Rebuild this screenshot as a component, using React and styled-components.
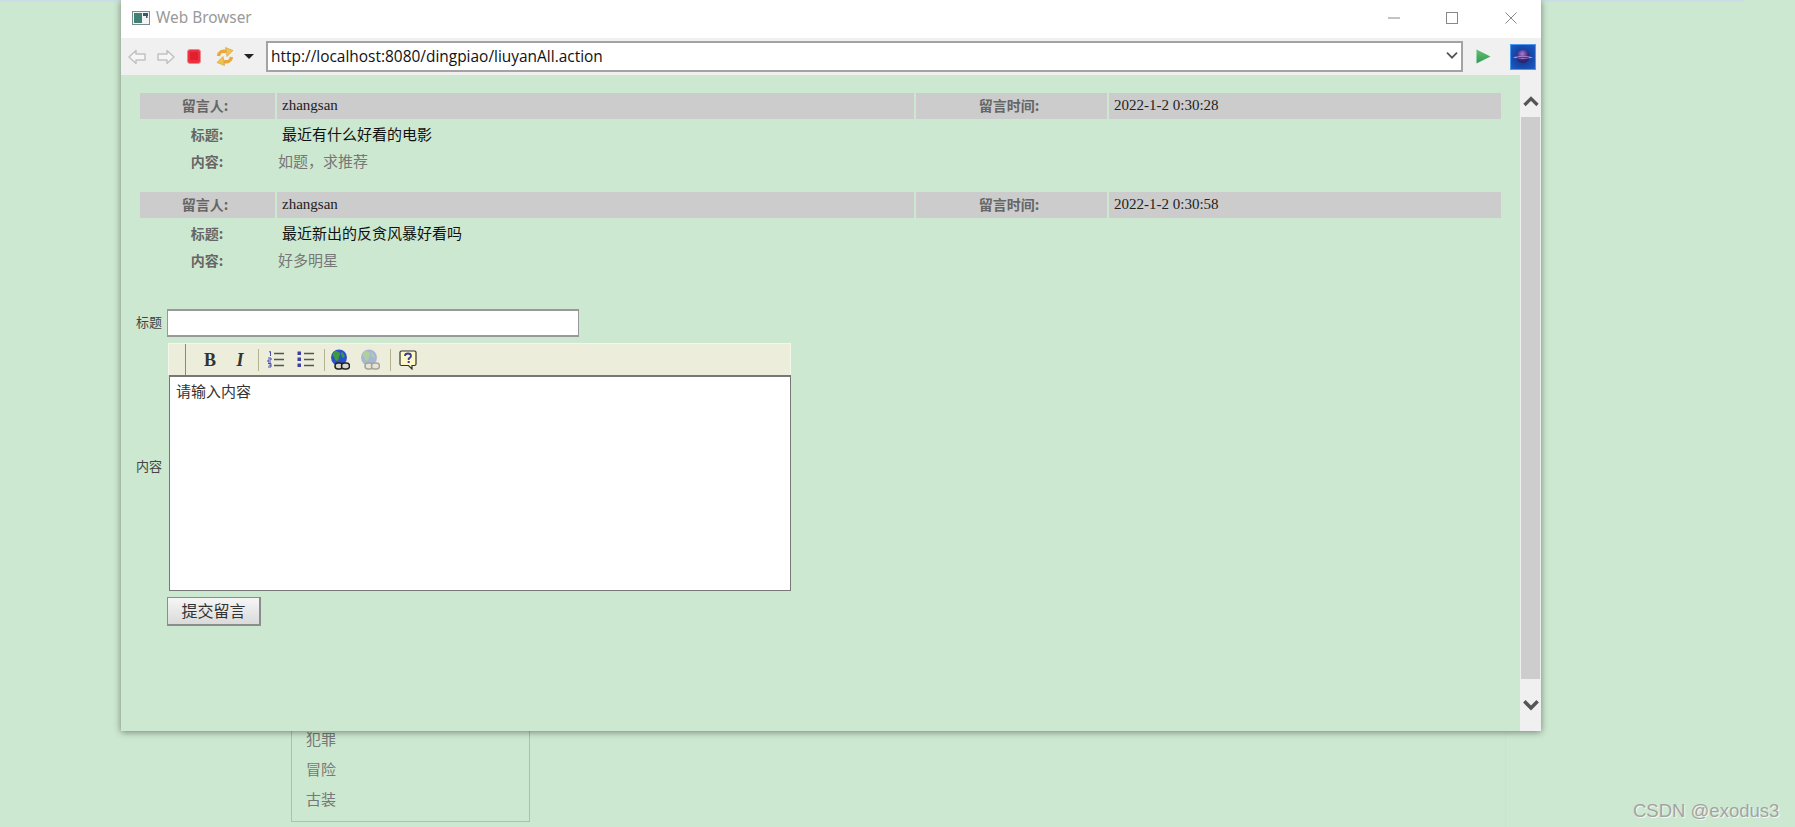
import styled, { createGlobalStyle } from 'styled-components';

const messages = [
  { id: 1, user: 'zhangsan', time: '2022-1-2 0:30:28', title: '最近有什么好看的电影', body: '如题\uFF0C求推荐' },
  { id: 2, user: 'zhangsan', time: '2022-1-2 0:30:58', title: '最近新出的反贪风暴好看吗', body: '好多明星' },
];

const cjk = '"Noto Sans CJK SC", "Liberation Sans", sans-serif';
const serif = '"Liberation Serif", "Noto Sans CJK SC", serif';

const GlobalStyle = createGlobalStyle`
  html, body {
    margin: 0;
    height: 827px;
    overflow: hidden;
    background: #cde8d0;
  }
  * {
    box-sizing: border-box;
  }
`;

// page lying behind the browser window
const Desktop = styled.div`
  position: relative;
  width: 1795px;
  height: 827px;
  overflow: hidden;
`;

const TopStrip = styled.div`
  width: 1744px;
  height: 2px;
  background: #cbdde6;
`;

const Behind = styled.div`
  width: 1506px;
  height: 825px;
  border-right: 1px solid #c6e2dc;
  display: flex;
  flex-direction: column;
  justify-content: flex-end;
  padding: 0 0 5px 291px;
`;

const GenreBox = styled.ul`
  width: 239px;
  margin: 0;
  padding: 0 0 7px 14px;
  list-style: none;
  border: 1px solid #8fcac4;
  border-width: 0 1px 1px 1px;
`;

const Genre = styled.li`
  height: 30px;
  font: 15px/30px ${cjk};
  color: #777;
`;

const Watermark = styled.div`
  position: absolute;
  left: 1633px;
  top: 800px;
  font: 18.5px/22px "Liberation Sans", sans-serif;
  color: #a3a3a3;
  text-shadow: 1px 1px 0 #f2f7f2;
  white-space: nowrap;
`;

const Browser = styled.div`
  position: absolute;
  left: 121px;
  top: 0;
  width: 1420px;
  height: 731px;
  display: flex;
  flex-direction: column;
  background: #fff;
  box-shadow: 0 1px 7px rgba(0, 0, 0, 0.45);
`;

const TitleBar = styled.div`
  height: 38px;
  display: flex;
  align-items: center;
  padding: 0 1px 2px 11px;
  background: #fff;
`;

const TitleText = styled.span`
  margin-left: 6px;
  font: 15.4px/20px "Noto Sans", sans-serif;
  color: #999;
  flex: 1;
`;

const WindowControl = styled.div`
  width: 58.5px;
  height: 36px;
  display: flex;
  align-items: center;
  justify-content: center;
`;

const Toolbar = styled.div`
  height: 37px;
  display: flex;
  align-items: center;
  background: #f0f0f0;
`;

const NavIcon = styled.span`
  display: flex;
  margin-left: ${(p) => p.$ml}px;
`;

const UrlBar = styled.div`
  width: 1197px;
  height: 31px;
  margin-left: 12px;
  display: flex;
  align-items: center;
  justify-content: space-between;
  padding: 0 3px 2px 3px;
  background: #fff;
  border: 2px solid #a3a3a3;
  font: 15.45px/20px "Open Sans", sans-serif;
  color: #111;
`;

const Body = styled.div`
  flex: 1;
  display: flex;
  min-height: 0;
`;

const Content = styled.div`
  flex: 1;
  padding-top: 18px;
  background: #cde8d0;
`;

const Message = styled.div`
  width: 1361px;
  margin: 0 0 16px 19px;
`;

const HeadRow = styled.div`
  display: grid;
  grid-template-columns: 135px 637px 191px 392px;
  column-gap: 2px;
  margin-bottom: 2px;
`;

const HeadLabel = styled.div`
  height: 26px;
  padding-right: 5px;
  background: #cccccc;
  font: bold 14px/24px ${cjk};
  color: #666;
  text-align: center;
`;

const HeadValue = styled.div`
  height: 26px;
  padding-left: 5px;
  background: #cccccc;
  font: 15px/24px ${serif};
  color: #222;
  white-space: nowrap;
`;

const TextRow = styled.div`
  height: 27.5px;
  padding-bottom: 2px;
  display: flex;
  align-items: center;
`;

const TextLabel = styled.div`
  width: 137px;
  padding-right: 3px;
  font: bold 14px/20px ${cjk};
  color: #666;
  text-align: center;
`;

const TitleValue = styled.div`
  margin-left: 5px;
  font: 15px/20px ${cjk};
  color: #111;
`;

const BodyValue = styled.div`
  margin-left: 1px;
  font: 15px/20px ${cjk};
  color: #777;
`;

const Form = styled.form`
  margin: 34px 0 0;
  display: grid;
  grid-template-columns: 41px auto;
  justify-content: start;
  column-gap: 5px;
  row-gap: 6px;
  align-items: center;
`;

const FieldLabel = styled.label`
  margin-bottom: 2px;
  font: 13px/16px ${cjk};
  color: #444;
  white-space: nowrap;
  text-align: right;
`;

const TitleInput = styled.input`
  display: block;
  width: 412px;
  height: 28px;
  padding: 0 4px;
  background: #fff;
  border: 1px solid #999;
  border-width: 2px 1px;
`;

const Editor = styled.div`
  width: 623px;
  height: 248px;
  margin-left: 1px;
  display: flex;
  flex-direction: column;
`;

const EditorTools = styled.div`
  height: 32px;
  display: flex;
  align-items: center;
  background: #ecedda;
  border: 1px solid #f5f5ea;
  border-bottom: 0;
`;

const ToolHandle = styled.div`
  width: 17px;
  height: 100%;
  margin-right: 9px;
  border-right: 1px solid #8a8a78;
`;

const ToolSlot = styled.span`
  width: 30px;
  display: flex;
  justify-content: center;
  align-items: center;
  font: ${(p) => (p.$italic ? 'italic' : 'normal')} bold 18px/20px ${serif};
  color: #333;
`;

const ToolSep = styled.span`
  width: 1px;
  height: 22px;
  margin: 0 ${(p) => p.$r}px 0 ${(p) => p.$l}px;
  background: #b5b28f;
`;

const EditorArea = styled.div`
  flex: 1;
  margin-left: 1px;
  padding: 4px 6px;
  background: #fff;
  border: 1px solid #777;
  border-top: 2px solid #777;
  font: 15px/20px ${cjk};
  color: #333;
`;

const SubmitButton = styled.button`
  grid-column: 2;
  width: 94px;
  height: 29px;
  padding: 0 0 2px;
  background: linear-gradient(#f6f6f6, #dadada);
  border: 2px solid #8c8c8c;
  border-width: 1px 2px 2px 1px;
  font: 16px/22px ${cjk};
  color: #333;
`;

const ScrollBar = styled.div`
  width: 21px;
  display: flex;
  flex-direction: column;
  background: #f0f0f0;
`;

const ScrollArrow = styled.div`
  height: ${(p) => p.$h}px;
  padding-top: ${(p) => p.$top}px;
  display: flex;
  align-items: center;
  justify-content: center;
`;

const ScrollThumb = styled.div`
  flex: 1;
  margin: 0 1px;
  background: #cdcdcd;
`;

const AppIcon = () => (
  <svg width="18" height="14" viewBox="0 0 18 14">
    <rect x="0.5" y="0.5" width="17" height="13" fill="#f4f6f6" stroke="#7d8a8c" />
    <rect x="2" y="2" width="8" height="10" fill="#3f8077" />
    <rect x="11" y="2" width="5" height="3" fill="#2f5f70" />
    <rect x="14" y="2" width="1.5" height="5" fill="#45586a" />
  </svg>
);

const ArrowOutline = ({ flip }) => (
  <svg width="18" height="16" viewBox="0 0 18 16">
    <path
      d="M1 8 L8 1.5 V5 H17 V11 H8 V14.5 Z"
      fill="#f6f6f6"
      stroke="#c2c2c2"
      strokeWidth="1.5"
      strokeLinejoin="round"
      transform={flip ? 'translate(18 0) scale(-1 1)' : undefined}
    />
  </svg>
);

const StopIcon = () => (
  <svg width="14" height="15" viewBox="0 0 14 15">
    <rect x="0.5" y="0.5" width="13" height="14" rx="2.5" fill="#ee2f3d" stroke="#e88a90" />
    <rect x="3" y="3" width="8" height="8" fill="#e01f30" />
  </svg>
);

const RefreshIcon = () => (
  <svg width="18" height="19" viewBox="0 0 18 19">
    <path d="M2.5 9 C3 5 6 3.5 10 4.5" fill="none" stroke="#e9a93a" strokeWidth="3.4" />
    <path d="M9.5 0.5 L17 3.5 L11 9.5 Z" fill="#f2c24e" stroke="#cf9a35" strokeWidth="0.6" />
    <path d="M15.5 10 C15 14 12 15.5 8 14.5" fill="none" stroke="#e9a93a" strokeWidth="3.4" />
    <path d="M8.5 18.5 L1 15.5 L7 9.5 Z" fill="#f2c24e" stroke="#cf9a35" strokeWidth="0.6" />
  </svg>
);

const DropTriangle = () => (
  <svg width="10" height="5" viewBox="0 0 10 5">
    <path d="M0 0 H10 L5 5 Z" fill="#222" />
  </svg>
);

const ChevronDown = ({ size = 12, color = '#555', weight = 1.8 }) => (
  <svg width={size} height={size * 0.7} viewBox="0 0 12 8">
    <path d="M1 1.5 L6 6.5 L11 1.5" fill="none" stroke={color} strokeWidth={weight} />
  </svg>
);

const ChevronUp = () => (
  <svg width="16" height="11" viewBox="0 0 16 11">
    <path d="M1.5 9 L8 2.5 L14.5 9" fill="none" stroke="#555" strokeWidth="3.2" />
  </svg>
);

const PlayIcon = () => (
  <svg width="15" height="15" viewBox="0 0 15 15">
    <defs>
      <linearGradient id="playFill" x1="0" y1="0" x2="0" y2="1">
        <stop offset="0" stopColor="#62c26e" />
        <stop offset="1" stopColor="#2f9a55" />
      </linearGradient>
    </defs>
    <path d="M0.5 0.5 L14.5 7.5 L0.5 14.5 Z" fill="url(#playFill)" />
  </svg>
);

const ServerIcon = () => (
  <svg width="26" height="26" viewBox="0 0 26 26">
    <defs>
      <radialGradient id="serverFill" cx="0.5" cy="0.5" r="0.75">
        <stop offset="0" stopColor="#0f2f86" />
        <stop offset="1" stopColor="#1f62cf" />
      </radialGradient>
      <radialGradient id="planetFill" cx="0.45" cy="0.3" r="0.8">
        <stop offset="0" stopColor="#a77ed8" />
        <stop offset="0.55" stopColor="#3c2a78" />
        <stop offset="1" stopColor="#221a55" />
      </radialGradient>
    </defs>
    <rect x="0.5" y="0.5" width="25" height="25" fill="url(#serverFill)" stroke="#4a9bf0" />
    <circle cx="13" cy="12.5" r="6.5" fill="url(#planetFill)" />
    <path d="M3 13.5 C8 11.5 18 11.5 23 13.5 C18 15 8 15 3 13.5 Z" fill="#b68fdc" />
    <path d="M7 14 C10 13 16 13 19 14" fill="none" stroke="#2c2066" strokeWidth="0.9" />
  </svg>
);

const OrderedIcon = () => (
  <svg width="18" height="17" viewBox="0 0 18 17">
    <path d="M2 1 L3.5 0.5 V5 M1 7 H4 V9 H1 V11 H4 M1 12.5 H4 V16 H1 M1.8 14.2 H4" fill="none" stroke="#4a4ab4" strokeWidth="1" />
    <path d="M7 2.5 H17 M7 8.5 H17 M7 14.5 H17" stroke="#555" strokeWidth="1.3" />
  </svg>
);

const BulletIcon = () => (
  <svg width="18" height="17" viewBox="0 0 18 17">
    <path d="M0.5 0.5 H4 V4 H0.5 Z M0.5 6.5 H4 V10 H0.5 Z M0.5 12.5 H4 V16 H0.5 Z" fill="#3f3fa8" />
    <path d="M7 2.5 H17 M7 8.5 H17 M7 14.5 H17" stroke="#555" strokeWidth="1.3" />
  </svg>
);

const GlobeLinkIcon = ({ muted }) => (
  <svg width="20" height="21" viewBox="0 0 20 21" opacity={muted ? 0.35 : 1}>
    <circle cx="9" cy="8.5" r="8" fill="#2a52c8" />
    <path d="M5 2 C8 2 11 4 10 6 C8 8 10 10 7 12 C4 11 5 8 3 7 C2 5 4 3 5 2 Z" fill="#3f9a3c" />
    <path d="M11 3 C14 4 15 7 14 9 C12 9 11 6 11 3 Z" fill="#3f9a3c" />
    <rect x="5" y="14" width="8" height="6" rx="3" fill="#d8d8d0" stroke="#222" strokeWidth="1.5" />
    <rect x="11.5" y="14" width="8" height="6" rx="3" fill="#d8d8d0" stroke="#222" strokeWidth="1.5" />
  </svg>
);

const HelpIcon = () => (
  <svg width="18" height="20" viewBox="0 0 18 20">
    <path d="M2.5 1 H15.5 Q17 1 17 2.5 V14 Q17 15.5 15.5 15.5 H13 V19 L9.5 15.5 H2.5 Q1 15.5 1 14 V2.5 Q1 1 2.5 1 Z" fill="#fdf8c8" stroke="#333" strokeWidth="1.2" />
    <path d="M6 6 Q6 3.5 9 3.5 Q12 3.5 12 6 Q12 7.5 9.7 8.5 V10" fill="none" stroke="#3a3a9a" strokeWidth="1.8" />
    <rect x="8.7" y="11" width="2" height="2" fill="#3a3a9a" />
  </svg>
);

const App = () => {
  return (
    <Desktop>
      <GlobalStyle />
      <TopStrip />
      <Behind>
        <GenreBox>
          <Genre>犯罪</Genre>
          <Genre>冒险</Genre>
          <Genre>古装</Genre>
        </GenreBox>
      </Behind>

      <Browser>
        <TitleBar>
          <AppIcon />
          <TitleText>Web Browser</TitleText>
          <WindowControl>
            <svg width="12" height="2" viewBox="0 0 12 2">
              <path d="M0 1 H12" stroke="#888" />
            </svg>
          </WindowControl>
          <WindowControl>
            <svg width="12" height="12" viewBox="0 0 12 12">
              <rect x="0.5" y="0.5" width="11" height="11" fill="none" stroke="#888" />
            </svg>
          </WindowControl>
          <WindowControl>
            <svg width="12" height="12" viewBox="0 0 12 12">
              <path d="M0.5 0.5 L11.5 11.5 M11.5 0.5 L0.5 11.5" stroke="#888" />
            </svg>
          </WindowControl>
        </TitleBar>

        <Toolbar>
          <NavIcon $ml={7}><ArrowOutline /></NavIcon>
          <NavIcon $ml={11}><ArrowOutline flip /></NavIcon>
          <NavIcon $ml={12}><StopIcon /></NavIcon>
          <NavIcon $ml={15}><RefreshIcon /></NavIcon>
          <NavIcon $ml={10}><DropTriangle /></NavIcon>
          <UrlBar>
            http://localhost:8080/dingpiao/liuyanAll.action
            <ChevronDown />
          </UrlBar>
          <NavIcon $ml={13}><PlayIcon /></NavIcon>
          <NavIcon $ml={19}><ServerIcon /></NavIcon>
        </Toolbar>

        <Body>
          <Content>
            {messages.map(({ id, user, time, title, body }) => (
              <Message key={id}>
                <HeadRow>
                  <HeadLabel>留言人:</HeadLabel>
                  <HeadValue>{user}</HeadValue>
                  <HeadLabel>留言时间:</HeadLabel>
                  <HeadValue>{time}</HeadValue>
                </HeadRow>
                <TextRow>
                  <TextLabel>标题:</TextLabel>
                  <TitleValue>{title}</TitleValue>
                </TextRow>
                <TextRow>
                  <TextLabel>内容:</TextLabel>
                  <BodyValue>{body}</BodyValue>
                </TextRow>
              </Message>
            ))}

            <Form onSubmit={(e) => e.preventDefault()}>
              <FieldLabel>标题</FieldLabel>
              <TitleInput type="text" />
              <FieldLabel>内容</FieldLabel>
              <Editor>
                <EditorTools>
                  <ToolHandle />
                  <ToolSlot>B</ToolSlot>
                  <ToolSlot $italic>I</ToolSlot>
                  <ToolSep $l={3} $r={2} />
                  <ToolSlot><OrderedIcon /></ToolSlot>
                  <ToolSlot><BulletIcon /></ToolSlot>
                  <ToolSep $l={3} $r={0} />
                  <ToolSlot><GlobeLinkIcon /></ToolSlot>
                  <ToolSlot><GlobeLinkIcon muted /></ToolSlot>
                  <ToolSep $l={5} $r={2} />
                  <ToolSlot><HelpIcon /></ToolSlot>
                </EditorTools>
                <EditorArea>请输入内容</EditorArea>
              </Editor>
              <SubmitButton type="submit">提交留言</SubmitButton>
            </Form>
          </Content>

          <ScrollBar>
            <ScrollArrow $h={42} $top={10}><ChevronUp /></ScrollArrow>
            <ScrollThumb />
            <ScrollArrow $h={52} $top={0}>
              <ChevronDown size={16} weight={2.6} />
            </ScrollArrow>
          </ScrollBar>
        </Body>
      </Browser>

      <Watermark>CSDN @exodus3</Watermark>
    </Desktop>
  );
};

export default App;
